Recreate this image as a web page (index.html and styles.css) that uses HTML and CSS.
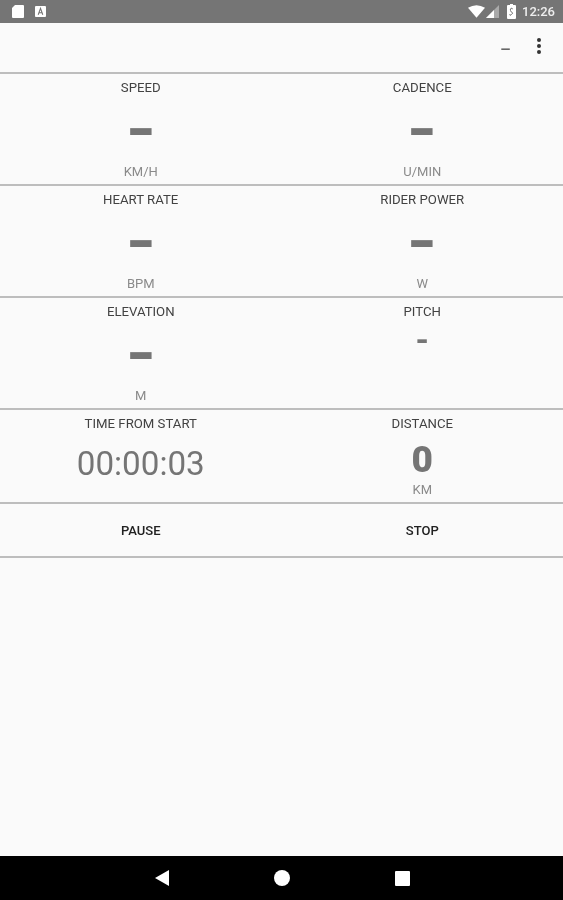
FILE: index.html
```html
<!DOCTYPE html>
<html lang="en">
<head>
  <meta charset="UTF-8">
  <meta name="viewport" content="width=device-width, initial-scale=1.0">
  <title>Ride</title>
  <link rel="stylesheet" href="styles.css">
</head>
<body>
  <div class="status-bar">
    <div class="status-left">
      <svg width="12" height="13" viewBox="0 0 12 13"><path d="M3 0h8a1 1 0 0 1 1 1v11a1 1 0 0 1-1 1H1a1 1 0 0 1-1-1V3z" fill="#fff"/></svg>
      <svg width="11" height="11" viewBox="0 0 12 12"><rect width="12" height="12" rx="1" fill="#fff"/><path d="M3.500 9.500L6 2.500l2.500 7M4.400 7.300h3.200" fill="none" stroke="#757575" stroke-width="1.200"/></svg>
    </div>
    <div class="status-right">
      <svg class="wifi" width="17" height="13" viewBox="0 0 18 13"><path d="M0 2.500Q9-3 18 2.500L9 13z" fill="#fff"/></svg>
      <svg class="signal" width="13" height="13" viewBox="0 0 13 13"><path d="M13 0v13H0z" fill="#aaa"/><path d="M8 5v8H0z" fill="#fff"/></svg>
      <svg class="battery" width="9" height="15" viewBox="0 0 9 15"><path d="M3 0h3v1h2a1 1 0 0 1 1 1v12a1 1 0 0 1-1 1H1a1 1 0 0 1-1-1V2a1 1 0 0 1 1-1h2z" fill="#fff"/><path d="M5.800 5Q5 4 4 4.300T3.500 6.500 5.300 8.500 4.500 10.500 3 10" fill="none" stroke="#757575" stroke-width="1"/></svg>
      <span class="clock">12:26</span>
    </div>
  </div>

  <div class="toolbar">
    <span class="toolbar-dash">–</span>
    <div class="overflow-menu"><i></i><i></i><i></i></div>
  </div>

  <div class="row">
    <div class="cell">
      <div class="label">SPEED</div>
      <div class="value big">-</div>
      <div class="unit">KM/H</div>
    </div>
    <div class="cell">
      <div class="label">CADENCE</div>
      <div class="value big">-</div>
      <div class="unit">U/MIN</div>
    </div>
  </div>
  <div class="row">
    <div class="cell">
      <div class="label">HEART RATE</div>
      <div class="value big">-</div>
      <div class="unit">BPM</div>
    </div>
    <div class="cell">
      <div class="label">RIDER POWER</div>
      <div class="value big">-</div>
      <div class="unit">W</div>
    </div>
  </div>
  <div class="row">
    <div class="cell">
      <div class="label">ELEVATION</div>
      <div class="value big">-</div>
      <div class="unit">M</div>
    </div>
    <div class="cell">
      <div class="label">PITCH</div>
      <div class="value small">-</div>
    </div>
  </div>
  <div class="row row-short">
    <div class="cell">
      <div class="label">TIME FROM START</div>
      <div class="value time">00:00:03</div>
    </div>
    <div class="cell">
      <div class="label">DISTANCE</div>
      <div class="value distance">0</div>
      <div class="unit">KM</div>
    </div>
  </div>
  <div class="row row-buttons">
    <div class="action">PAUSE</div>
    <div class="action">STOP</div>
  </div>

  <div class="spacer"></div>

  <div class="nav-bar">
    <svg width="14" height="16" viewBox="0 0 14 16"><path d="M14 0v16L0 8z" fill="#fff"/></svg>
    <svg width="16" height="16" viewBox="0 0 16 16"><circle cx="8" cy="8" r="8" fill="#fff"/></svg>
    <svg width="15" height="15" viewBox="0 0 15 15"><rect width="15" height="15" rx="1" fill="#fff"/></svg>
  </div>
</body>
</html>
```

FILE: styles.css
```css
html, body {
  height: 100%;
}
body {
  margin: 0;
  height: 900px;
  display: flex;
  flex-direction: column;
  overflow: hidden;
  background-color: #fafafa;
  font-family: Roboto, "Liberation Sans", sans-serif;
  color: #757575;
  filter: blur(0.6px);
}
.status-bar {
  height: 23px;
  flex: none;
  display: flex;
  justify-content: space-between;
  align-items: center;
  padding: 0 8px 0 12px;
  background-color: #757575;
}
.status-left {
  display: flex;
  align-items: center;
  gap: 11px;
}
.status-right {
  display: flex;
  align-items: center;
}
.signal {
  margin-left: 1px;
}
.battery {
  margin-left: 8px;
}
.clock {
  margin-left: 6px;
  font-size: 13px;
  font-weight: 500;
  color: #eeeeee;
}
.toolbar {
  height: 49px;
  flex: none;
  display: flex;
  justify-content: flex-end;
  align-items: center;
  gap: 26px;
  padding: 0 22px 0 0;
}
.toolbar-dash {
  font-size: 17px;
  font-weight: 500;
  color: #666;
  margin-top: 2px;
}
.overflow-menu {
  display: flex;
  flex-direction: column;
  gap: 2px;
  margin-bottom: 4px;
}
.overflow-menu i {
  width: 4px;
  height: 4px;
  border-radius: 50%;
  background-color: #333;
}
.row {
  height: 110px;
  flex: none;
  display: grid;
  grid-template-columns: 1fr 1fr;
  border-top: 2px solid #bdbdbd;
}
.row-short {
  height: 92px;
}
.row-buttons {
  height: 52px;
  align-items: center;
  border-bottom: 2px solid #bdbdbd;
}
.cell {
  display: flex;
  flex-direction: column;
  align-items: center;
  padding-top: 6px;
}
.label {
  height: 15px;
  line-height: 15px;
  font-size: 13.200px;
  color: #424242;
}
.unit {
  margin-top: auto;
  height: 17px;
  line-height: 17px;
  margin-bottom: 4px;
  font-size: 13px;
  color: #8a8a8a;
}
.value {
  text-align: center;
  color: #757575;
}
.big {
  margin-top: 8px;
  line-height: 54px;
  height: 54px;
  font-size: 54px;
  font-weight: 900;
  transform: scaleX(1.35);
}
.small {
  margin-top: 6px;
  line-height: 28px;
  font-size: 34px;
  font-weight: 700;
}
.time {
  margin-top: 13px;
  line-height: 40px;
  font-size: 33.200px;
}
.distance {
  margin-top: 9px;
  line-height: 40px;
  font-size: 37px;
  font-weight: 900;
}
.action {
  text-align: center;
  font-size: 13px;
  font-weight: 500;
  color: #212121;
}
.spacer {
  flex: 1;
}
.nav-bar {
  height: 44px;
  flex: none;
  display: flex;
  justify-content: center;
  align-items: center;
  gap: 105px;
  padding-left: 2px;
  background-color: #000;
}
```
